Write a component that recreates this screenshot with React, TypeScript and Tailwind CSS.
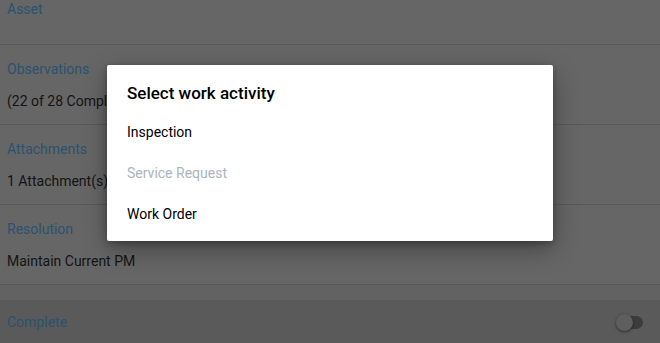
import { ReactNode } from "react";

const Row = ({ label, value, children }: { label: string; value?: string; children?: ReactNode }) => (
    <div className="h-[80px] border-b border-[#595959] pl-[7px] pt-[14px]">
        <div className="text-[14px] leading-[20px] text-[#2a5271]">{label}</div>
        {value && <div className="mt-[12px] text-[14px] leading-[20px] text-[#141414]">{value}</div>}
        {children}
    </div>
);

export default function App() {
    const activities = [
        { name: "Inspection", disabled: false },
        { name: "Service Request", disabled: true },
        { name: "Work Order", disabled: false },
    ];

    return (
        <div className="relative h-[343px] w-[660px] overflow-hidden bg-[#666666]" style={{ fontFamily: "Roboto, 'Noto Sans', sans-serif" }}>
            <div className="flex flex-col">
                <div className="h-[45px] border-b border-[#595959] pl-[7px] pt-[0px]">
                    <div className="text-[14px] leading-[18px] text-[#2a5271]">Asset</div>
                </div>
                <Row label="Observations" value="(22 of 28 Completed)" />
                <Row label="Attachments" value="1 Attachment(s)" />
                <Row label="Resolution" value="Maintain Current PM" />
                <div className="h-[15px] bg-[#626262]" />
                <div className="flex h-[44px] items-center justify-between bg-[#5a5a5a] pl-[7px] pr-[17px]">
                    <span className="text-[14px] leading-[20px] text-[#2a5271]">Complete</span>
                    <div className="relative h-[13px] w-[26px] rounded-full bg-[#3c3c3c]">
                        <div className="absolute left-[-1px] top-[-2px] h-[17px] w-[17px] rounded-full bg-[#5e5e5e] shadow-[0_1px_3px_rgba(0,0,0,0.5)]" />
                    </div>
                </div>
            </div>

            <div className="absolute left-[107px] top-[65px] h-[176px] w-[446px] rounded-[2px] bg-white shadow-[0_8px_24px_rgba(0,0,0,0.35),0_2px_6px_rgba(0,0,0,0.25)]">
                <div className="pl-[20px] pt-[17px] text-[17px] font-medium leading-[22px] text-black">Select work activity</div>
                <div className="mt-[8px] flex flex-col">
                    {activities.map((a) => (
                        <div
                            key={a.name}
                            className={`flex h-[41px] items-center pl-[20px] text-[14px] ${a.disabled ? "text-[#a9b5c1]" : "text-black"}`}
                        >
                            {a.name}
                        </div>
                    ))}
                </div>
            </div>
        </div>
    );
}
